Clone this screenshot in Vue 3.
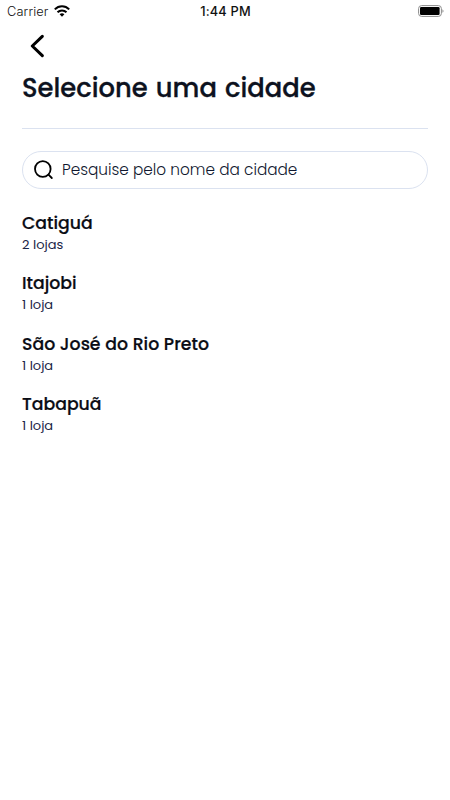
<script setup>
const cities = [
  { name: 'Catiguá', stores: '2 lojas', key: 'catigua' },
  { name: 'Itajobi', stores: '1 loja', key: 'itajobi' },
  { name: 'São José do Rio Preto', stores: '1 loja', key: 'rio-preto' },
  { name: 'Tabapuã', stores: '1 loja', key: 'tabapua' },
]
</script>

<template>
  <main class="screen">
    <header class="status">
      <div class="carrier">
        <span>Carrier</span>
        <svg class="wifi" viewBox="0 0 16 12" fill="none" stroke="#000" stroke-width="2">
          <path d="M.8 4.4C4.9.2 11.1.2 15.2 4.4" />
          <path d="M3.5 7.3C6 4.8 10 4.8 12.5 7.3" />
          <path d="M5.6 9.2C7 7.9 9 7.9 10.4 9.2L8 11.7Z" fill="#000" stroke="none" />
        </svg>
      </div>
      <span class="time">1:44 PM</span>
      <svg class="battery" viewBox="0 0 26 12">
        <rect x=".6" y=".6" width="22.8" height="10.8" rx="3" fill="none" stroke="#8b8b8b" />
        <rect x="2" y="2" width="19.6" height="8" rx="1.2" fill="#000" />
        <path d="M24.6 4.2Q26.2 6 24.6 7.8Z" fill="#555" />
      </svg>
    </header>
    <button class="back" aria-label="Voltar">
      <svg viewBox="0 0 14 24" fill="none" stroke="#000" stroke-width="3" stroke-linecap="round" stroke-linejoin="round">
        <path d="M12.3 2.3L2.3 12L12.3 21.7" />
      </svg>
    </button>
    <h1 class="title">Selecione uma cidade</h1>
    <div class="search">
      <svg viewBox="0 0 20 20" fill="none" stroke="#000" stroke-width="1.8" stroke-linecap="round">
        <circle cx="8.8" cy="9" r="7.8" />
        <path d="M14.5 14.7L17.8 18" />
      </svg>
      <span class="placeholder">Pesquise pelo nome da cidade</span>
    </div>
    <ul class="list">
      <li v-for="c in cities" :key="c.key" class="city">
        <span class="name">{{ c.name }}</span>
        <span class="stores">{{ c.stores }}</span>
      </li>
    </ul>
  </main>
</template>

<style>
body { background: #fff; }
</style>

<style scoped>
.screen {
  box-sizing: border-box;
  height: 800px;
  background: #fff;
  color: #0a0c14;
  font-family: Poppins, Inter, "Open Sans", sans-serif;
  white-space: nowrap;
}
.status {
  display: grid;
  grid-template-columns: 1fr auto 1fr;
  align-items: center;
  height: 22px;
  padding: 0 6px 0 7px;
  font-family: Inter, sans-serif;
  font-size: 12.8px;
  color: #111;
}
.carrier { display: flex; align-items: center; gap: 5px; }
.carrier span { font-weight: 300; letter-spacing: 0.1px; }
.wifi { width: 16px; height: 12px; }
.time { font-weight: 500; letter-spacing: 0.2px; }
.battery { width: 26px; height: 12px; justify-self: end; }
.back {
  display: block;
  width: 14px;
  height: 24px;
  margin: 12px 0 0 30px;
  padding: 0;
  border: 0;
  background: none;
}
.back svg { display: block; width: 14px; height: 24px; }
.title {
  margin: 10px 22px 0;
  height: 60px;
  border-bottom: 1px solid #dbe2f0;
  font-size: 25.8px;
  font-weight: 500;
  line-height: 40px;
  word-spacing: 1.5px;
  color: #0d1220;
  -webkit-text-stroke: 0.3px #0d1220;
}
.search {
  box-sizing: border-box;
  display: flex;
  align-items: center;
  gap: 8px;
  height: 38px;
  margin: 22px 22px 0;
  padding-left: 11px;
  border: 1px solid #dbe2f0;
  border-radius: 19px;
}
.search svg { width: 20px; height: 20px; }
.placeholder { font-size: 15.3px; font-weight: 300; line-height: 22px; padding-bottom: 1px; color: #10182f; }
.list { list-style: none; margin: 22px 0 0; padding: 0 22px; }
.city { display: flex; flex-direction: column; height: 60.4px; }
.name { font-size: 17.3px; font-weight: 500; line-height: 24px; word-spacing: 0.2px; -webkit-text-stroke: 0.2px #0a0c14; }
.stores { font-size: 13px; line-height: 20px; color: #1b2547; }
</style>
